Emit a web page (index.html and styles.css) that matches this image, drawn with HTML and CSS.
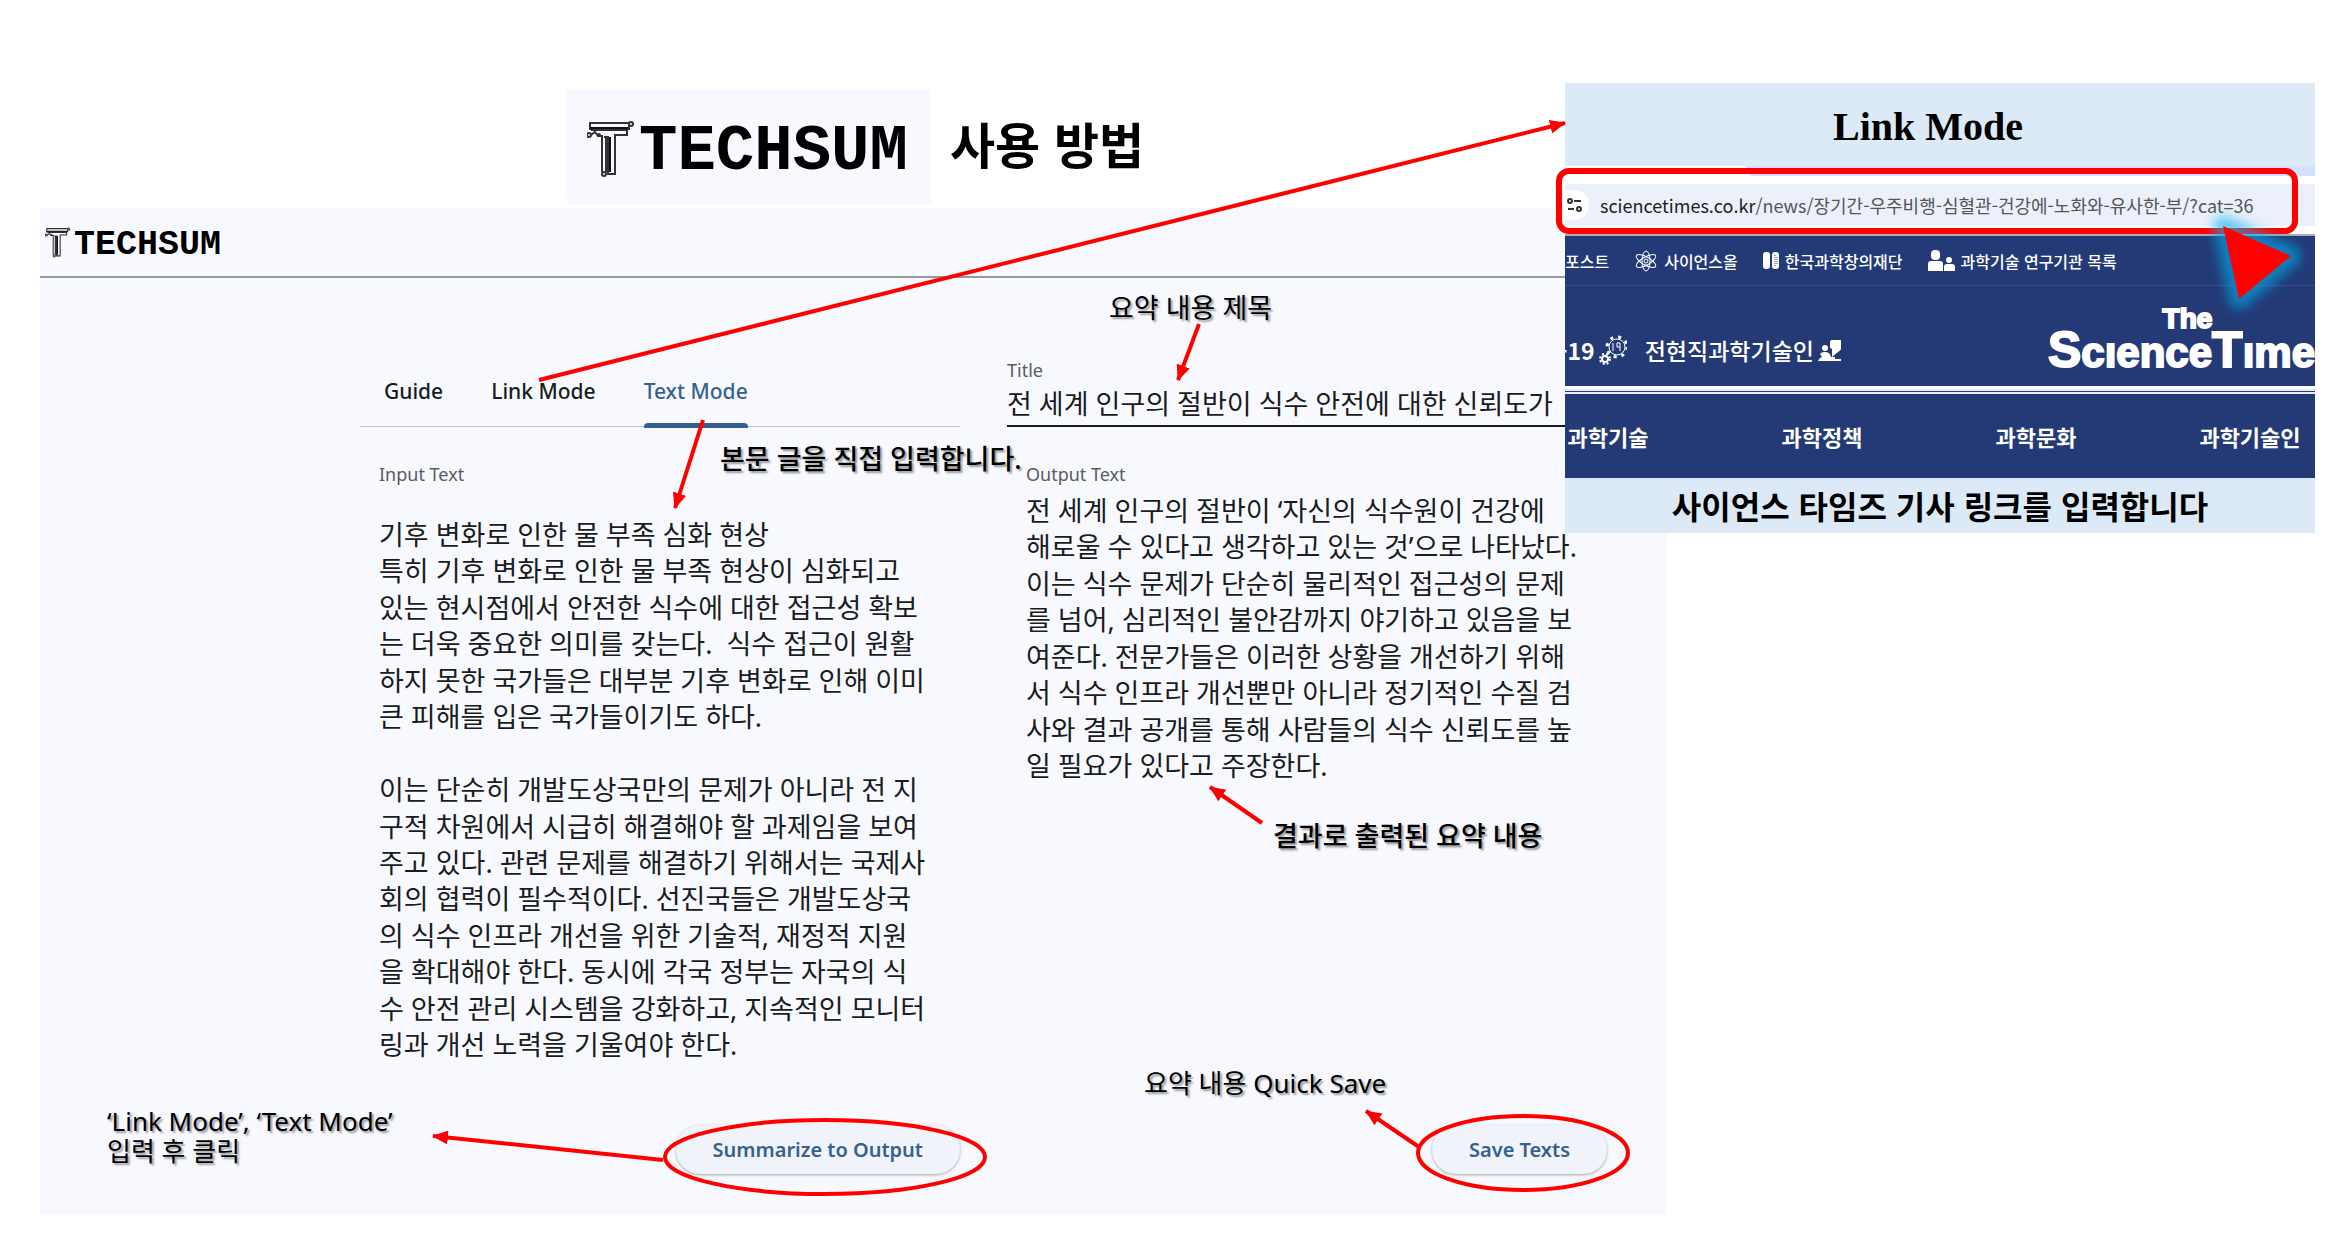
FILE: index.html
```html
<!DOCTYPE html>
<html lang="ko">
<head>
<meta charset="utf-8">
<title>TECHSUM 사용 방법</title>
<link rel="stylesheet" href="styles.css">
</head>
<body>
<svg class="defs" width="0" height="0" aria-hidden="true">
  <symbol id="mark" viewBox="0 0 48 58">
    <g fill="none" stroke="#333" stroke-width="2">
      <path d="M3 3H42V9H3Z"/>
      <path d="M4 10H40V15H28V54H21V17"/>
      <path d="M15 16V52M19 16V52M21 54V17H17"/>
      <path d="M4 15L8 12L11 16H16"/>
      <circle cx="44" cy="4" r="2"/>
      <circle cx="2" cy="15" r="2"/>
      <circle cx="12" cy="15" r="1"/>
      <circle cx="17" cy="54" r="2"/>
    </g>
    <path d="M3 8H41M23 17V52" stroke="#111" stroke-width="2"/>
  </symbol>
</svg>

<div class="slide">
  <header class="slide-head">
    <div class="brand brand-large">
      <svg class="brand-mark" aria-hidden="true"><use href="#mark"/></svg>
      <span>TECHSUM</span>
    </div>
    <h1>사용 방법</h1>
  </header>

  <section class="app">
    <header class="app-bar">
      <div class="brand">
        <svg class="brand-mark" aria-hidden="true"><use href="#mark"/></svg>
        <span>TECHSUM</span>
      </div>
    </header>
    <main class="workspace">
      <div class="column">
        <div class="tabs" role="tablist">
          <button class="tab" role="tab" type="button">Guide</button>
          <button class="tab" role="tab" type="button">Link Mode</button>
          <button class="tab tab-active" role="tab" type="button" aria-selected="true">Text Mode</button>
        </div>
        <label class="label label-text" for="input-text">Input Text</label>
        <textarea class="text text-input" id="input-text" rows="15">기후 변화로 인한 물 부족 심화 현상
특히 기후 변화로 인한 물 부족 현상이 심화되고
있는 현시점에서 안전한 식수에 대한 접근성 확보
는 더욱 중요한 의미를 갖는다.  식수 접근이 원활
하지 못한 국가들은 대부분 기후 변화로 인해 이미
큰 피해를 입은 국가들이기도 하다.

이는 단순히 개발도상국만의 문제가 아니라 전 지
구적 차원에서 시급히 해결해야 할 과제임을 보여
주고 있다. 관련 문제를 해결하기 위해서는 국제사
회의 협력이 필수적이다. 선진국들은 개발도상국
의 식수 인프라 개선을 위한 기술적, 재정적 지원
을 확대해야 한다. 동시에 각국 정부는 자국의 식
수 안전 관리 시스템을 강화하고, 지속적인 모니터
링과 개선 노력을 기울여야 한다.</textarea>
        <button class="action" type="button">Summarize to Output</button>
      </div>
      <div class="column">
        <label class="label label-title" for="title">Title</label>
        <input class="title-field" id="title" type="text" value="전 세계 인구의 절반이 식수 안전에 대한 신뢰도가">
        <label class="label label-text" for="output-text">Output Text</label>
        <textarea class="text text-output" id="output-text" rows="8">전 세계 인구의 절반이 ‘자신의 식수원이 건강에
해로울 수 있다고 생각하고 있는 것’으로 나타났다.
이는 식수 문제가 단순히 물리적인 접근성의 문제
를 넘어, 심리적인 불안감까지 야기하고 있음을 보
여준다. 전문가들은 이러한 상황을 개선하기 위해
서 식수 인프라 개선뿐만 아니라 정기적인 수질 검
사와 결과 공개를 통해 사람들의 식수 신뢰도를 높
일 필요가 있다고 주장한다.</textarea>
        <button class="action" type="button">Save Texts</button>
      </div>
    </main>
  </section>

  <aside class="card">
    <h2>Link Mode</h2>
    <div class="browser">
      <div class="tab-strip"></div>
      <div class="address">
        <svg class="site-info" viewBox="0 0 24 30" aria-hidden="true">
          <path d="M0 0H8C18 0 24 6 24 15S18 30 8 30H0Z" fill="#fff"/>
          <g fill="none" stroke="#333" stroke-width="2">
            <circle cx="5" cy="11" r="2"/><path d="M9 11H16M3 19H9"/><circle cx="14" cy="19" r="2"/>
          </g>
        </svg>
        <span class="url"><b>sciencetimes.co.kr</b>/news/장기간-우주비행-심혈관-건강에-노화와-유사한-부/?cat=36</span>
      </div>
    </div>
    <div class="site">
      <div class="site-links">
        <a href="#">포스트</a>
        <a href="#">
          <svg class="ico-atom" viewBox="0 0 24 22" fill="none" stroke="#fff" aria-hidden="true">
            <ellipse cx="12" cy="11" rx="4" ry="10"/>
            <ellipse cx="12" cy="11" rx="4" ry="11" transform="rotate(60 12 11)"/>
            <ellipse cx="12" cy="11" rx="4" ry="11" transform="rotate(-60 12 11)"/>
            <circle cx="12" cy="11" r="2"/>
          </svg>사이언스올</a>
        <a href="#">
          <svg class="ico-kofac" viewBox="0 0 16 18" aria-hidden="true">
            <rect width="7" height="17" rx="3" fill="#fff"/>
            <rect x="9" width="7" height="17" rx="3" fill="#fff"/>
            <path d="M12 3V14M14 5V12" stroke="#233a77" stroke-dasharray="1 1"/>
          </svg>한국과학창의재단</a>
        <a href="#">
          <svg class="ico-people" viewBox="0 0 27 21" fill="#fff" aria-hidden="true">
            <rect x="3" width="9" height="10" rx="4"/>
            <path d="M0 21V14Q0 11 3 11H12Q15 11 15 14V21Z"/>
            <circle cx="21" cy="10" r="3"/>
            <path d="M16 21V17Q16 14 19 14H24Q27 14 27 17V21Z"/>
          </svg>과학기술 연구기관 목록</a>
      </div>
      <div class="site-brand">
        <a class="covid" href="#">-19
          <svg class="ico-gears" viewBox="0 0 28 30" fill="none" stroke="#fff" aria-hidden="true">
            <circle cx="18" cy="12" r="8"/>
            <circle cx="18" cy="12" r="10" stroke-width="3" stroke-dasharray="3 5"/>
            <path d="M14 8V16M18 8H21V16M18 8V12H21" stroke-width="1"/>
            <circle cx="6" cy="24" r="3" stroke-width="2"/>
            <circle cx="6" cy="24" r="5" stroke-dasharray="2 2" stroke-width="2"/>
          </svg></a>
        <a href="#">전현직과학기술인<svg class="ico-talk" viewBox="0 0 23 21" fill="#fff" aria-hidden="true">
            <circle cx="7" cy="8" r="3"/>
            <path d="M0 21Q1 18 4 17L2 14Q3 12 7 12Q12 12 13 17H17V19H23V21Z"/>
            <path d="M13 0H23V9Q22 11 20 12L14 17V9L12 8V2Z"/>
          </svg></a>
        <div class="times"><span class="times-the">The</span><span class="times-name"><i>S</i>cıence<i>T</i>ıme</span></div>
      </div>
      <nav class="site-nav">
        <a href="#">과학기술</a>
        <a href="#">과학정책</a>
        <a href="#">과학문화</a>
        <a href="#">과학기술인</a>
      </nav>
    </div>
    <p class="card-note">사이언스 타임즈 기사 링크를 입력합니다</p>
  </aside>

  <p class="note note-title">요약 내용 제목</p>
  <p class="note note-body">본문 글을 직접 입력합니다.</p>
  <p class="note note-result">결과로 출력된 요약 내용</p>
  <p class="note note-mixed note-save">요약 내용 Quick Save</p>
  <p class="note note-mixed note-click">‘Link Mode’, ‘Text Mode’<br>입력 후 클릭</p>

  <svg class="marks" width="2320" height="1240" aria-hidden="true">
    <defs>
      <marker id="head" viewBox="0 0 16 14" refX="15" refY="7" markerWidth="16" markerHeight="14" markerUnits="userSpaceOnUse" orient="auto">
        <path d="M0 0L16 7L0 14Z" fill="#f00"/>
      </marker>
      <filter id="glow" x="-50%" y="-50%" width="200%" height="200%"><feGaussianBlur stdDeviation="6"/></filter>
    </defs>
    <g fill="none" stroke="#f00" stroke-width="4">
      <g marker-end="url(#head)">
        <path d="M539 380L1565 123"/>
        <path d="M703 420L675 508"/>
        <path d="M1199 324L1178 380"/>
        <path d="M1262 823L1210 787"/>
        <path d="M663 1160L433 1136"/>
        <path d="M1419 1147L1366 1111"/>
      </g>
      <ellipse cx="825" cy="1157" rx="160" ry="37"/>
      <ellipse cx="1523" cy="1153" rx="105" ry="37"/>
      <rect x="1559" y="171" width="736" height="60" rx="10" stroke-width="6"/>
    </g>
    <path d="M2223 226L2291 256L2239 299Z" fill="#00b0f0" stroke="#00b0f0" stroke-width="20" stroke-linejoin="round" opacity="0.6" filter="url(#glow)"/>
    <path d="M2223 226L2291 256L2239 299Z" fill="#f00"/>
  </svg>
</div>
</body>
</html>
```
FILE: styles.css
```css
* {
  box-sizing: border-box;
}

body {
  margin: 0;
  background: #fff;
  color: #000;
  font-family: "Noto Sans", "Noto Sans CJK KR", sans-serif;
}

h1, h2, p {
  margin: 0;
}

button, input, textarea {
  margin: 0;
  padding: 0;
  border: 0;
  background: none;
  color: inherit;
  font: inherit;
}

a {
  color: inherit;
  text-decoration: none;
}

.defs {
  position: absolute;
}

.slide {
  position: relative;
  padding: 89px 0 27px;
  overflow: hidden;
}

.slide-head {
  display: flex;
  align-items: center;
  gap: 19px;
  padding: 0 0 3px 567px;
}

h1 {
  padding-bottom: 8px;
  font-family: "Noto Sans CJK KR", sans-serif;
  font-size: 49px;
  line-height: 60px;
}

/* Wordmark */
.brand {
  display: flex;
  align-items: center;
  gap: 3px;
  font: bold 35px/40px "Liberation Mono", monospace;
}

.brand span {
  padding-top: 5px;
}

.brand-mark {
  width: 26px;
  height: 31px;
}

.brand-large {
  gap: 4px;
  padding: 4px 20px 0;
  width: 364px;
  height: 116px;
  background: #f8f9ff;
  font-size: 64px;
  line-height: 64px;
}

.brand-large .brand-mark {
  width: 48px;
  height: 58px;
}

/* Application window */
.app {
  margin: 0 662px 0 40px;
  background: #f8f9ff;
}

.app-bar {
  display: flex;
  align-items: center;
  height: 70px;
  padding-left: 5px;
  border-bottom: 2px solid #969b98;
}

.workspace {
  display: grid;
  grid-template-columns: 1fr 1fr;
  gap: 47px;
  padding: 77px 60px 41px 320px;
}

.column {
  display: flex;
  flex-direction: column;
  color: #191c20;
}

.tabs {
  display: flex;
  gap: 48px;
  height: 72px;
  padding-left: 24px;
  border-bottom: 1px solid #c3c6cf;
}

.tab {
  position: relative;
  font-size: 21px;
  font-weight: 500;
}

.tab-active {
  color: #36618e;
}

.tab-active::after {
  content: "";
  position: absolute;
  right: 0;
  bottom: -2px;
  left: 0;
  height: 5px;
  border-radius: 4px 4px 0 0;
  background: #36618e;
}

.label {
  color: #5a5c62;
  font-size: 18px;
  line-height: 24px;
}

.label-text {
  margin-top: 35px;
  padding-left: 19px;
}

.label-title {
  padding-top: 3px;
}

.text,
.title-field {
  font-size: 27px;
  line-height: 1.35;
}

.title-field {
  height: 45px;
  padding-bottom: 2px;
  border-bottom: 2px solid #191c20;
}

.text {
  margin: 7px 0 0 19px;
  overflow: hidden;
  resize: none;
}

.text-input {
  margin: 31px 0 61px 19px;
}

.action {
  align-self: flex-end;
  height: 49px;
  margin-top: auto;
  padding: 0 37px;
  border-radius: 24px;
  background: #f1f3fa;
  box-shadow: 0 1px 3px #00000055;
  color: #36618e;
  font-size: 20px;
  font-weight: 600;
}

/* Link mode card */
.card {
  position: absolute;
  top: 83px;
  right: 14px;
  left: 1565px;
  overflow: hidden;
  background: #dce9f6;
}

h2 {
  padding: 22px 0 17px;
  font: bold 40px/44px "Liberation Serif", serif;
  text-align: center;
  text-indent: -24px;
}

.browser {
  padding-bottom: 8px;
  border-bottom: 2px solid #a9adb8;
  background: #fff;
}

.tab-strip {
  height: 10px;
  margin: 0 0 8px 181px;
  border-bottom-left-radius: 8px;
  background: #d3e1fd;
}

.address {
  display: flex;
  align-items: center;
  gap: 11px;
  height: 42px;
  background: #ebf0fa;
  color: #555;
  font: 18px/30px "Noto Sans CJK KR", sans-serif;
  white-space: nowrap;
}

.address b {
  color: #222;
  font-weight: 400;
}

.site-info {
  width: 24px;
  height: 30px;
}

.site {
  background: #233a77;
  color: #fff;
  font-family: "Noto Sans CJK KR", sans-serif;
  white-space: nowrap;
}

.site a {
  display: flex;
  align-items: center;
}

.site-links {
  display: flex;
  gap: 25px;
  height: 50px;
  border-bottom: 1px solid #33508c;
  font-size: 16px;
  font-weight: 500;
}

.site-links a {
  gap: 6px;
}

.ico-atom {
  width: 24px;
  height: 22px;
}

.ico-kofac {
  width: 16px;
  height: 18px;
}

.ico-people {
  width: 27px;
  height: 21px;
}

.site-brand {
  display: flex;
  gap: 18px;
  height: 103px;
  padding-top: 28px;
  border-bottom: 3px solid #fff;
  font-size: 23px;
  font-weight: 500;
}

.site-brand a {
  gap: 4px;
}

.site-brand .covid {
  margin-left: -6px;
  font-weight: 700;
}

.ico-gears {
  width: 28px;
  height: 30px;
}

.ico-talk {
  width: 23px;
  height: 21px;
}

.times {
  display: flex;
  flex-direction: column;
  align-items: center;
  margin: -8px 0 0 auto;
  font-family: "Liberation Sans Narrow", "Liberation Sans", sans-serif;
  font-weight: bold;
  -webkit-text-stroke: 2px #fff;
}

.times-the {
  margin-left: 12px;
  font-size: 28px;
  line-height: 26px;
}

.times-name {
  font-size: 42px;
  line-height: 36px;
}

.times-name i {
  font-size: 50px;
  font-style: normal;
}

.site-nav {
  display: grid;
  grid-template-columns: repeat(4, 1fr);
  align-items: center;
  justify-items: center;
  height: 89px;
  margin: 0 -42px 0 -64px;
  border-top: 5px double #e6eaf4;
  font-size: 22px;
  font-weight: 700;
}

.card-note {
  font: 700 32px/55px "Noto Sans CJK KR", sans-serif;
  text-align: center;
}

/* Callouts */
.note {
  position: absolute;
  font-size: 27px;
  font-weight: 500;
  line-height: 30px;
  text-shadow: 2px 2px 2px #00000066;
  white-space: nowrap;
}

.note-mixed {
  font-size: 26px;
  font-weight: 400;
}

.note-title {
  top: 293px;
  left: 1109px;
  font-weight: 400;
}

.note-body {
  top: 444px;
  left: 720px;
}

.note-result {
  top: 821px;
  left: 1273px;
}

.note-save {
  top: 1068px;
  left: 1144px;
}

.note-click {
  top: 1106px;
  left: 107px;
}

.marks {
  position: absolute;
  top: 0;
  left: 0;
  pointer-events: none;
}
```
